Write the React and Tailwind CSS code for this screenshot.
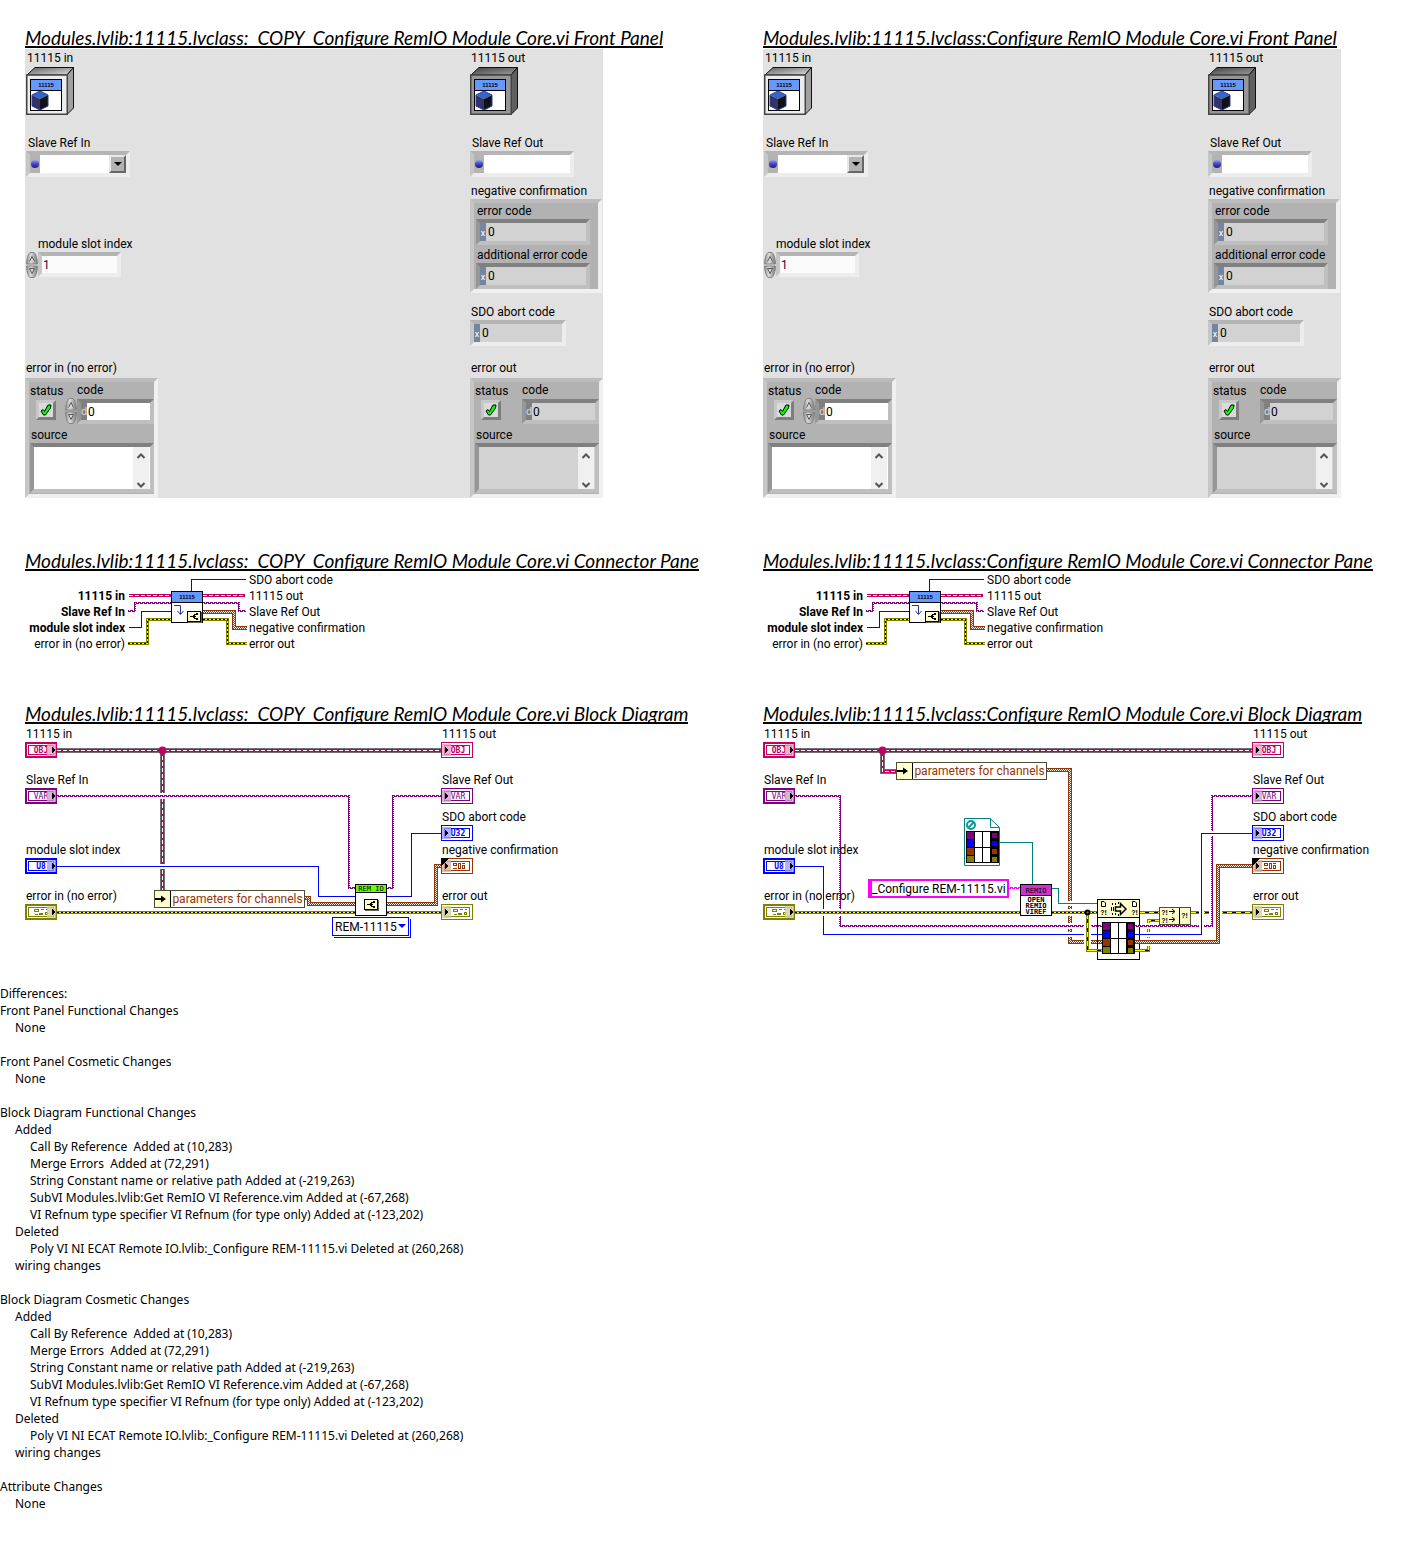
import React, { useId } from "react";

const PINK = "#c40062";
const PURPLE = "#800080";
const BLUE = "#0000ff";
const BROWN = "#993300";
const OLIVE = "#808000";
const TEAL = "#008080";

/* ---------- shared pieces ---------- */

function Heading({ children }) {
  return (
    <h2 className="h-[22px] w-fit overflow-hidden whitespace-pre border-b-2 border-black font-[Lato,sans-serif] text-[19px] italic leading-[24px] [font-variant-ligatures:none]">
      {children}
    </h2>
  );
}

function Patterns() {
  return (
    <svg width="0" height="0" className="absolute" aria-hidden="true">
      <defs>
        <pattern id="weave" width="2" height="2" patternUnits="userSpaceOnUse">
          <rect width="2" height="2" fill={BROWN} />
          <rect width="1" height="1" fill="#fff" />
          <rect x="1" y="1" width="1" height="1" fill="#fff" />
        </pattern>
        <pattern id="zigzag" width="4" height="2" patternUnits="userSpaceOnUse">
          <rect width="4" height="2" fill={PURPLE} />
          <rect x="1" width="1" height="1" fill="#fff" />
          <rect x="3" y="1" width="1" height="1" fill="#fff" />
        </pattern>
        <pattern id="zigzagPink" width="4" height="2" patternUnits="userSpaceOnUse">
          <rect width="4" height="2" fill="#ff00ff" />
          <rect x="1" width="1" height="1" fill="#fff" />
          <rect x="3" y="1" width="1" height="1" fill="#fff" />
        </pattern>
        <linearGradient id="shadeTop" x1="0" y1="0" x2="1" y2="1">
          <stop offset="0" stopColor="#606060" />
          <stop offset="1" stopColor="#e0e0e0" />
        </linearGradient>
        <linearGradient id="shadeTopDark" x1="0" y1="0" x2="1" y2="1">
          <stop offset="0" stopColor="#404040" />
          <stop offset="1" stopColor="#a0a0a0" />
        </linearGradient>
        <linearGradient id="ball" x1="0" y1="0" x2="0" y2="1">
          <stop offset="0" stopColor="#9a9af0" />
          <stop offset="0.5" stopColor="#4444c8" />
          <stop offset="1" stopColor="#1c1c78" />
        </linearGradient>
        <linearGradient id="knob" x1="0" y1="0" x2="1" y2="0">
          <stop offset="0" stopColor="#8c8c8c" />
          <stop offset="0.4" stopColor="#dcdcdc" />
          <stop offset="1" stopColor="#787878" />
        </linearGradient>
      </defs>
    </svg>
  );
}

/* ---------- wires ---------- */

function Wire({ kind, d, halo }) {
  const layers = {
    obj: [["#707070", 5], [PINK, 3], ["#fff", 1, "4 2"]],
    objThin: [[PINK, 3], ["#fff", 1, "4 2"]],
    ref: [["url(#zigzag)", 2]],
    str: [["url(#zigzagPink)", 2]],
    int: [[BLUE, 1]],
    vi: [[TEAL, 1]],
    cluster: [[BROWN, 4], ["url(#weave)", 2]],
    error: [[OLIVE, 3], ["#ffff00", 1], ["#000", 1, "2 2"]],
    errorLong: [[OLIVE, 3], ["#000", 1], ["#ffff00", 1, "5 4"]],
  }[kind];
  return (
    <g fill="none" strokeLinejoin="miter" shapeRendering="crispEdges">
      {halo && <path d={d} stroke="#fff" strokeWidth={layers[0][1] + 4} />}
      {layers.map(([stroke, width, dash], i) => (
        <path key={i} d={d} stroke={stroke} strokeWidth={width} strokeDasharray={dash} />
      ))}
    </g>
  );
}

function Glyph({ x, y, size = 7, fill = "#000", children, weight = 700, mono }) {
  return (
    <text
      x={x}
      y={y}
      fontFamily={mono ? "DejaVu Sans Mono, monospace" : "Liberation Sans, sans-serif"}
      fontWeight={weight}
      fontSize={size}
      fill={fill}
      textAnchor="middle"
    >
      {children}
    </text>
  );
}

/* ---------- front panel ---------- */

function ClassCube({ dark }) {
  return (
    <svg width="48" height="48" viewBox="0 0 48 48" className="block">
      <path d="M1 8 L9 0.500 H47.500 L41 8 Z" fill={dark ? "url(#shadeTopDark)" : "url(#shadeTop)"} stroke="#111" />
      <path d="M41 8 L47.500 0.500 V41 L41 47.500 Z" fill={dark ? "#606060" : "#a0a0a0"} stroke="#111" />
      <rect x="0.750" y="8" width="40.500" height="39.250" fill={dark ? "#969696" : "#ececec"} stroke="#444" strokeWidth="1.500" />
      <rect x="4.500" y="12.500" width="31" height="31" fill="#fff" stroke="#000" />
      <rect x="5" y="13" width="30" height="10" fill="#6699ff" />
      <path d="M5 23.500 H35" stroke="#000" />
      <Glyph x="20" y="20" size={6}>11115</Glyph>
      <path d="M6 28 L14 24 L22 28 L14 32 Z" fill="#3366cc" />
      <path d="M6 28 L14 32 V43 L6 39 Z" fill="#333366" />
      <path d="M14 32 L22 28 V39 L14 43 Z" fill="#111118" />
      <path d="M6 28 L14 24 L22 28 V39 L14 43 L6 39 Z" fill="none" stroke="#2a3c9c" />
    </svg>
  );
}

function Spinner() {
  return (
    <svg width="12" height="26" viewBox="0 0 12 26" className="block shrink-0">
      <path d="M0.500 12 Q1 3 4 0.500 H8 Q11 3 11.500 12 Z" fill="url(#knob)" stroke="#848484" />
      <path d="M0.500 14 Q1 23 4 25.500 H8 Q11 23 11.500 14 Z" fill="url(#knob)" stroke="#848484" />
      <path d="M3.500 9.500 L6 4.500 L8.500 9.500" fill="#d8d8d8" stroke="#5a5a5a" />
      <path d="M8.500 16.500 L6 21.500 L3.500 16.500 Z" fill="#d8d8d8" stroke="#5a5a5a" />
    </svg>
  );
}

function Bullet() {
  return (
    <span className="flex w-[10px] items-center justify-center bg-[#b3b3b3]">
      <svg width="8" height="8" viewBox="0 0 8 8">
        <circle cx="4" cy="4" r="4" fill="url(#ball)" />
      </svg>
    </span>
  );
}

const LIGHT_BEVEL = "border-4 border-t-[#b4b4b4] border-l-[#c6c6c6] border-r-[#ededed] border-b-[#ededed]";
const DARK_BEVEL = "border-4 border-t-[#808080] border-l-[#969696] border-r-[#bfbfbf] border-b-[#bfbfbf]";

function RefControl({ label, output }) {
  const id = useId();
  return (
    <div className="mt-5">
      <label htmlFor={id} className="block pl-0.5">{label}</label>
      <div className={`flex h-[26px] w-[104px] ${LIGHT_BEVEL}`}>
        <Bullet />
        {output ? (
          <input id={id} readOnly className="min-w-0 flex-1 bg-white outline-none" />
        ) : (
          <div className="relative flex min-w-0 flex-1 bg-white">
            <select id={id} className="w-full appearance-none bg-white outline-none">
              <option></option>
            </select>
            <span className="pointer-events-none absolute inset-y-0 right-0 flex w-[17px] items-center justify-center border-2 border-t-[#e8e8e8] border-l-[#e8e8e8] border-r-[#666] border-b-[#666] bg-[#b3b3b3]">
              <svg width="8" height="4" viewBox="0 0 8 4"><path d="M0 0 H8 L4 4 Z" /></svg>
            </span>
          </div>
        )}
      </div>
    </div>
  );
}

function HexField({ label, bevel, width }) {
  const id = useId();
  return (
    <div>
      <label htmlFor={id} className="block pl-px">{label}</label>
      <div className={`flex h-[26px] ${width} ${bevel}`}>
        <span className="w-[6px] bg-[#74859f] text-center text-[9px] leading-[20px] text-white">x</span>
        <input id={id} readOnly defaultValue="0" className="min-w-0 flex-1 bg-[#d2d2d2] pl-0.5 outline-none" />
      </div>
    </div>
  );
}

function ErrorCluster({ title, output }) {
  const codeId = useId();
  const sourceId = useId();
  return (
    <fieldset>
      <legend className="pl-px">{title}</legend>
      <div className="mt-0.5 flex h-[120px] w-[133px] flex-col border-4 border-t-[#bcbcbc] border-l-[#c6c6c6] border-r-[#f0f0f0] border-b-[#f0f0f0] bg-[#b2b2b2] pl-px">
        <div className="flex justify-between">
          <div className="pt-px">
            <span className="block">status</span>
            <button
              type="button"
              aria-label="status"
              className="ml-[6px] mt-px flex size-5 items-center justify-center border-[3px] border-t-[#c8c8c8] border-l-[#c8c8c8] border-r-[#7d7d7d] border-b-[#7d7d7d] bg-[#dadada]"
            >
              <svg width="12" height="12" viewBox="0 0 12 12" className="shrink-0">
                <path d="M1 7 L3 5.500 L4.500 7.500 L8 1 L11 1 L10.500 4 L5.500 11 L3.500 11 Z" fill="#00ff00" stroke="#000" />
              </svg>
            </button>
          </div>
          <div>
            <label htmlFor={codeId} className={`block ${output ? "" : "pl-3"}`}>code</label>
            <div className="flex items-center">
              {!output && <Spinner />}
              <div className={`mt-px flex h-[25px] w-[77px] ${DARK_BEVEL}`}>
                <span className="w-[6px] bg-[#808080] text-center text-[11px] leading-[17px] text-[#d8d8d8]">d</span>
                <input
                  id={codeId}
                  readOnly={output}
                  defaultValue="0"
                  className={`min-w-0 flex-1 pl-px outline-none ${output ? "bg-[#d2d2d2]" : "bg-white"}`}
                />
              </div>
            </div>
          </div>
        </div>
        <label htmlFor={sourceId} className="mt-[3px] block pl-px">source</label>
        <div className={`flex h-[50px] ${DARK_BEVEL} ${output ? "bg-[#d2d2d2]" : "bg-white"}`}>
          <textarea id={sourceId} readOnly={output} className="block min-w-0 flex-1 resize-none overflow-hidden outline-none" />
          <div className="mr-px flex w-4 flex-col items-center justify-between bg-[#f0f0f0] pt-[6px] pb-px">
            <svg width="8" height="6" viewBox="0 0 8 6" fill="none"><path d="M0.500 5 L4 1.500 L7.500 5" stroke="#555" strokeWidth="2" /></svg>
            <svg width="8" height="6" viewBox="0 0 8 6" fill="none"><path d="M0.500 1 L4 4.500 L7.500 1" stroke="#555" strokeWidth="2" /></svg>
          </div>
        </div>
      </div>
    </fieldset>
  );
}

function FrontPanel() {
  const slotId = useId();
  return (
    <div className="mt-px flex h-[449px] w-full max-w-[578px] justify-between bg-[#e1e1e1] pt-px">
      <div className="flex flex-col">
        <div className="pl-px">
          <span className="block pl-px">11115 in</span>
          <div className="mt-px"><ClassCube /></div>
          <RefControl label="Slave Ref In" />
          <div className="mt-[59px]">
            <label htmlFor={slotId} className="block pl-3">module slot index</label>
            <div className="flex">
              <Spinner />
              <input
                id={slotId}
                defaultValue="1"
                className="h-[25px] w-[83px] border-4 border-t-[#b4b4b4] border-l-[#c6c6c6] border-r-[#ededed] border-b-[#ededed] bg-[#fafafa] pl-px text-[#400040] outline-none"
              />
            </div>
          </div>
        </div>
        <div className="mt-auto"><ErrorCluster title="error in (no error)" /></div>
      </div>
      <div className="flex flex-col">
        <span className="block pl-px">11115 out</span>
        <div className="mt-px"><ClassCube dark /></div>
        <RefControl label="Slave Ref Out" output />
        <fieldset className="mt-[6px]">
          <legend className="pl-px">negative confirmation</legend>
          <div className="flex h-[94px] w-[132px] flex-col gap-[2px] border-4 border-t-[#bcbcbc] border-l-[#c6c6c6] border-r-[#f0f0f0] border-b-[#f0f0f0] bg-[#b2b2b2] pl-0.5">
            <HexField label="error code" bevel={DARK_BEVEL} width="w-[114px]" />
            <HexField label="additional error code" bevel={DARK_BEVEL} width="w-[114px]" />
          </div>
        </fieldset>
        <div className="mt-[11px]">
          <HexField label="SDO abort code" bevel={LIGHT_BEVEL} width="w-[96px]" />
        </div>
        <div className="mt-auto"><ErrorCluster title="error out" output /></div>
      </div>
    </div>
  );
}

/* ---------- connector pane ---------- */

function WrenchBadge({ x, y }) {
  return (
    <g transform={`translate(${x} ${y})`} shapeRendering="crispEdges">
      <rect x="1" y="1" width="14" height="11" fill="#666" />
      <rect x="0.500" y="0.500" width="13" height="10" fill="#ffffcc" stroke="#000" />
      <path d="M3 5 H6 V4 H7 V3 H10 V4 H8 V7 H10 V8 H7 V7 H6 V6 H3 Z M8 5 H9 V6 H8 Z" fill="#000" />
      <path d="M9 2 H11 V4 H9 Z M9 7 H11 V9 H9 Z" fill="#000" />
    </g>
  );
}

function ConnectorPane() {
  return (
    <div className="mt-px flex leading-4">
      <div className="w-[100px] shrink-0 whitespace-nowrap pt-4 text-right">
        <div className="font-bold">11115 in</div>
        <div className="font-bold">Slave Ref In</div>
        <div className="font-bold">module slot index</div>
        <div>error in (no error)</div>
      </div>
      <svg width="124" height="80" viewBox="125 572 124 80" className="block shrink-0">
        <Wire kind="int" d="M191.500 591 V579.500 H246" />
        <Wire kind="objThin" d="M129 595.500 H171" />
        <Wire kind="objThin" d="M203 595.500 H245" />
        <Wire kind="ref" d="M128 611 H135 V603 H171" />
        <Wire kind="ref" d="M203 603 H239 V611 H246" />
        <Wire kind="int" d="M129 627.500 H141.500 V611.500 H171" />
        <Wire kind="cluster" d="M203 612 H234 V628 H247" />
        <Wire kind="error" d="M128 643.500 H147.500 V619.500 H171" />
        <Wire kind="error" d="M203 619.500 H227.500 V643.500 H247" />
        <rect x="171.500" y="591.500" width="31" height="31" fill="#fff" stroke="#000" />
        <rect x="172" y="592" width="30" height="10" fill="#6699ff" />
        <path d="M172 602.500 H202" stroke="#000" />
        <Glyph x="187" y="599" size={6}>11115</Glyph>
        <path d="M174 605.500 H180.500 V614 M177.500 611 L180.500 614.500 L183.500 611" fill="none" stroke="#333399" />
        <WrenchBadge x={187} y={611} />
      </svg>
      <div className="whitespace-nowrap">
        <div>SDO abort code</div>
        <div>11115 out</div>
        <div>Slave Ref Out</div>
        <div>negative confirmation</div>
        <div>error out</div>
      </div>
    </div>
  );
}

/* ---------- block diagram ---------- */

function ClusterMark({ x, color, error }) {
  return error ? (
    <path d={`M${x} 5.500 h4 v2 h-4 z M${x + 1} 10.500 h3 M${x + 5} 9.500 h3 v1 h-3 z M${x + 7} 5.500 h3 M${x + 12} 5.500 h2 M${x + 11.500} 8.500 h2 v2 h-2 z`} fill="none" stroke={color} />
  ) : (
    <path d={`M${x} 5.500 h3 v2 h-3 z M${x} 10.500 h4 M${x + 5.500} 5.500 h2 v5 h-2 z M${x + 9} 5.500 h3 M${x + 9.500} 7.500 h2 v3 h-2 z`} fill="none" stroke={color} />
  );
}

function Terminal({ label, code, color, out, at, corner }) {
  const mark = code === "ERR" || code === "CLU";
  const weight = code === "VAR" ? 400 : 700;
  return (
    <div className={`absolute ${at} whitespace-nowrap leading-4`}>
      <div className="pl-px">{label}</div>
      <svg width="32" height="16" viewBox="0 0 32 16" className="block" shapeRendering="crispEdges">
        {out ? (
          <>
            <rect x="0.500" y="0.500" width="31" height="15" fill="#fff" stroke={color} />
            <rect x="3.500" y="3.500" width="25" height="9" fill="#fff" stroke={color} />
            {mark ? <ClusterMark x={12} color={color} error={code === "ERR"} /> : <Glyph mono x="17" y="11" size={8} weight={weight} fill={color}>{code}</Glyph>}
            <rect x="1" y="2" width="9" height="12" fill="#fff" opacity="0.700" />
            <rect x="1" y="2" width="9" height="12" fill={color} opacity="0.300" />
            <path d="M4 5 L8 8 L4 11 Z" fill="#000" />
          </>
        ) : (
          <>
            <rect x="1" y="1" width="30" height="14" fill="#fff" stroke={color} strokeWidth="2" />
            <rect x="3.500" y="3.500" width="25" height="9" fill="#fff" stroke={color} />
            {mark ? <ClusterMark x={9} color={color} error={code === "ERR"} /> : <Glyph mono x="16" y="11" size={8} weight={weight} fill={color}>{code}</Glyph>}
            <rect x="22" y="2" width="9" height="12" fill="#fff" opacity="0.700" />
            <rect x="22" y="2" width="9" height="12" fill={color} opacity="0.300" />
            <path d="M27 5 L31 8 L27 11 Z" fill="#000" />
          </>
        )}
        {corner && <path d="M0 0 H8 L0 8 Z" fill="#000" />}
      </svg>
    </div>
  );
}

function InputTerminals() {
  return (
    <>
      <Terminal at="left-0 top-[2px]" label="11115 in" code="OBJ" color={PINK} />
      <Terminal at="left-0 top-[48px]" label="Slave Ref In" code="VAR" color={PURPLE} />
      <Terminal at="left-0 top-[118px]" label="module slot index" code="U8" color={BLUE} />
      <Terminal at="left-0 top-[164px]" label="error in (no error)" code="ERR" color={OLIVE} />
    </>
  );
}

function OutputTerminals({ at }) {
  return (
    <div className={`absolute ${at} top-0`}>
      <Terminal at="left-0 top-[2px]" label="11115 out" code="OBJ" color={PINK} out />
      <Terminal at="left-0 top-[48px]" label="Slave Ref Out" code="VAR" color={PURPLE} out />
      <Terminal at="left-0 top-[85px]" label="SDO abort code" code="U32" color={BLUE} out />
      <Terminal at="left-0 top-[118px]" label="negative confirmation" code="CLU" color={BROWN} out corner />
      <Terminal at="left-0 top-[164px]" label="error out" code="ERR" color={OLIVE} out />
    </div>
  );
}

function Unbundle({ at }) {
  return (
    <div className={`absolute ${at} flex h-[18px] w-[151px] border border-[#4d4d33] bg-white`}>
      <span className="flex w-4 items-center border-r border-black bg-[#ffffcc]">
        <svg width="11" height="8" viewBox="0 0 11 8"><path d="M0 3 H6 V0.500 L11 4 L6 7.500 V5 H0 Z" /></svg>
      </span>
      <span className="flex-1 whitespace-nowrap text-center leading-4 text-[#993300]">parameters for channels</span>
    </div>
  );
}

function TypeGrid({ x, y }) {
  const colors = [PURPLE, BLUE, BROWN, OLIVE];
  return (
    <g transform={`translate(${x} ${y})`} shapeRendering="crispEdges">
      <rect width="33" height="32" fill="#000" />
      <rect x="9" y="1" width="7" height="15" fill="#fff" />
      <rect x="17" y="1" width="7" height="15" fill="#fff" />
      <rect x="9" y="17" width="7" height="14" fill="#fff" />
      <rect x="17" y="17" width="7" height="14" fill="#fff" />
      {colors.map((c, i) => (
        <g key={c}>
          <rect x="1" y={1 + i * 8} width="7" height={i === 3 ? 6 : 7} fill={c} />
          <rect x="26" y={2 + i * 8} width="5" height="5" fill={c} />
        </g>
      ))}
    </g>
  );
}

function Canvas({ children }) {
  return (
    <svg width="640" height="240" viewBox="25 724 640 240" className="absolute left-0 top-0 max-w-none">
      {children}
    </svg>
  );
}

function CopyDiagram() {
  const id = useId();
  return (
    <div className="relative h-[240px]">
      <Canvas>
        <Wire kind="obj" d="M57 750.500 H441" />
        <Wire kind="obj" d="M162.500 750 V890" />
        <circle cx="162.500" cy="750.500" r="4" fill={PINK} />
        <Wire kind="ref" d="M57 796 H349 V888 H355" halo />
        <Wire kind="ref" d="M387 888 H393 V796 H441" />
        <Wire kind="int" d="M57 866.500 H318.500 V896.500 H355" halo />
        <Wire kind="int" d="M387 896.500 H411.500 V833.500 H441" />
        <Wire kind="cluster" d="M305 898 H309 V904 H355" />
        <Wire kind="cluster" d="M387 904 H436 V866 H442" />
        <Wire kind="error" d="M57 912.500 H355" />
        <Wire kind="error" d="M387 912.500 H441" />
        <rect x="355.500" y="884.500" width="31" height="31" fill="#fff" stroke="#000" />
        <rect x="356" y="885" width="30" height="7" fill="#66ff00" />
        <path d="M356 892.500 H386" stroke="#000" />
        <Glyph mono x="371" y="891" weight={400}>REM IO</Glyph>
        <WrenchBadge x={364} y={899} />
      </Canvas>
      <InputTerminals />
      <OutputTerminals at="left-[416px]" />
      <Unbundle at="left-[129px] top-[166px]" />
      <div className="absolute left-[307px] top-[193px] h-[19px] w-[77px] border border-[#0000ff] bg-white shadow-[1px_1px_0_#fff,2px_2px_0_#0000ff]">
        <label htmlFor={id} className="sr-only">Instance</label>
        <select id={id} className="block h-[17px] w-full appearance-none bg-transparent pl-0.5 outline-none">
          <option>REM-11115</option>
        </select>
        <svg width="8" height="4" viewBox="0 0 8 4" className="pointer-events-none absolute right-[2px] top-[6px]">
          <path d="M0 0 H8 L4 4 Z" fill={BLUE} />
        </svg>
      </div>
    </div>
  );
}

function ReferenceDiagram() {
  return (
    <div className="relative h-[240px]">
      <Canvas>
        <Wire kind="obj" d="M144.500 750 V771.500 H158" />
        <Wire kind="obj" d="M57 750.500 H514" />
        <circle cx="144.500" cy="750.500" r="4" fill={PINK} />
        <Wire kind="cluster" d="M309 770 H332 V942 H359" />
        <Wire kind="int" d="M57 866.500 H85.500 V934.500 H359" halo />
        <Wire kind="ref" d="M57 796 H102 V926 H359" halo />
        <Wire kind="error" d="M57 912.500 H282" halo />
        <Wire kind="error" d="M314 912.500 H359" halo />
        <Wire kind="vi" d="M262 842.500 H294.500 V884" />
        <Wire kind="vi" d="M314 888.500 H320.500 V903.500 H359" halo />
        <Wire kind="str" d="M271 888 H282" />
        <Wire kind="errorLong" d="M349.500 914 V950.500 H364" halo />
        <circle cx="349.500" cy="912.500" r="3" fill="#000" />
        <circle cx="349.500" cy="912.500" r="1" fill={OLIVE} />

        <Wire kind="errorLong" d="M402 912.500 H421" />
        <Wire kind="errorLong" d="M453 912.500 H514" />
        <Wire kind="errorLong" d="M402 950.500 H410.500 V920.500 H421" />
        <Wire kind="cluster" d="M402 942 H480 V866 H515" halo />
        <Wire kind="ref" d="M402 926 H474 V796 H514" halo />
        <Wire kind="int" d="M402 934.500 H463.500 V833.500 H514" halo />

        <path d="M226.500 818.500 H252 L261.500 827.500 V865.500 H226.500 Z" fill="#fff" stroke={TEAL} />
        <path d="M252.500 818.500 V827.500 H261" fill="none" stroke={TEAL} />
        <circle cx="233" cy="825" r="4" fill="none" stroke="#109898" strokeWidth="2" />
        <path d="M230 828 L236 822" stroke="#109898" strokeWidth="2" />
        <TypeGrid x={228} y={831} />

        <rect x="282.500" y="884.500" width="31" height="31" fill="#fff" stroke="#000" />
        <rect x="283" y="885" width="30" height="10" fill="#cc33cc" />
        <path d="M283 895.500 H313" stroke="#000" />
        <Glyph mono x="298" y="893" weight={400}>REMIO</Glyph>
        <Glyph mono x="298" y="902">OPEN</Glyph>
        <Glyph mono x="298" y="908">REMIO</Glyph>
        <Glyph mono x="298" y="914">VIREF</Glyph>

        <rect x="359.500" y="899.500" width="42" height="60" fill="#fff" stroke="#000" />
        <rect x="360" y="900" width="41" height="18" fill="#ffffcc" />
        <path d="M360 917.500 H401" stroke="#000" />
        <path d="M363.500 901.500 H366 L367.500 903 V906.500 H363.500 Z M394.500 901.500 H397 L398.500 903 V906.500 H394.500 Z" fill="#fff" stroke="#000" />
        <Glyph x="365.500" y="915">?!</Glyph>
        <Glyph x="396.500" y="915">?!</Glyph>
        <path d="M373.500 907 V911 M375.500 907 V911 M374.500 903 V905 M377.500 903 V905 M380.500 902 V904 M374.500 913 V915 M377.500 913 V915 M380.500 914 V916" stroke="#000" />
        <path d="M377.500 907 H382.500 V903.500 L388 909 L382.500 914.500 V911 H377.500 Z" fill="#ffffcc" stroke="#000" strokeWidth="1.500" />
        <TypeGrid x={364} y={922} />
        <Wire kind="ref" d="M360 926 H364" />
        <Wire kind="int" d="M360 934.500 H364" />
        <Wire kind="cluster" d="M360 942 H364" />
        <Wire kind="errorLong" d="M354 950.500 H364" />
        <Wire kind="ref" d="M397 926 H402" />
        <Wire kind="int" d="M397 934.500 H402" />
        <Wire kind="cluster" d="M397 942 H402" />
        <Wire kind="errorLong" d="M397 950.500 H402" />

        <rect x="421.500" y="907.500" width="31" height="17" fill="#ffffcc" stroke="#4d4d33" />
        <path d="M441.500 908 V924" stroke="#000" />
        <Glyph x="426.500" y="915">?!</Glyph>
        <Glyph x="426.500" y="923">?!</Glyph>
        <Glyph x="446.500" y="918">?!</Glyph>
        <path d="M431 911.500 H436 M434 909 L437 911.500 L434 914 M431 919.500 H436 M434 917 L437 919.500 L434 922" fill="none" stroke="#000" />
      </Canvas>
      <InputTerminals />
      <OutputTerminals at="left-[489px]" />
      <Unbundle at="left-[133px] top-[38px]" />
      <input
        aria-label="VI name"
        readOnly
        defaultValue="_Configure REM-11115.vi"
        className="absolute left-[105px] top-[155px] h-[19px] w-[141px] border-2 border-l-4 border-[#ff00ff] bg-white outline-none"
      />
    </div>
  );
}

/* ---------- report ---------- */

const ADDED = [
  "Call By Reference  Added at (10,283)",
  "Merge Errors  Added at (72,291)",
  "String Constant name or relative path Added at (-219,263)",
  "SubVI Modules.lvlib:Get RemIO VI Reference.vim Added at (-67,268)",
  "VI Refnum type specifier VI Refnum (for type only) Added at (-123,202)",
];
const DELETED = ["Poly VI NI ECAT Remote IO.lvlib:_Configure REM-11115.vi Deleted at (260,268)"];
const DIAGRAM_CHANGES = [
  { text: "Added", items: ADDED },
  { text: "Deleted", items: DELETED },
  { text: "wiring changes" },
];
const REPORT = [
  { title: "Front Panel Functional Changes", entries: [{ text: "None" }] },
  { title: "Front Panel Cosmetic Changes", entries: [{ text: "None" }] },
  { title: "Block Diagram Functional Changes", entries: DIAGRAM_CHANGES },
  { title: "Block Diagram Cosmetic Changes", entries: DIAGRAM_CHANGES },
  { title: "Attribute Changes", entries: [{ text: "None" }] },
];

function Report() {
  return (
    <section className="mt-[21px] whitespace-pre pb-8 font-['Noto_Sans',sans-serif] text-[12px] leading-[17px]">
      <h2>Differences:</h2>
      <div className="flex flex-col gap-[17px]">
        {REPORT.map(({ title, entries }) => (
          <div key={title}>
            <h3>{title}</h3>
            <ul className="pl-[15px]">
              {entries.map(({ text, items }) => (
                <li key={text}>
                  {text}
                  {items && (
                    <ul className="pl-[15px]">
                      {items.map((item) => <li key={item}>{item}</li>)}
                    </ul>
                  )}
                </li>
              ))}
            </ul>
          </div>
        ))}
      </div>
    </section>
  );
}

function Version({ name, children }) {
  return (
    <section>
      <Heading>{`${name} Front Panel`}</Heading>
      <FrontPanel />
      <div className="mt-[51px]"><Heading>{`${name} Connector Pane`}</Heading></div>
      <ConnectorPane />
      <div className="mt-[50px]"><Heading>{`${name} Block Diagram`}</Heading></div>
      {children}
    </section>
  );
}

export default function App() {
  return (
    <main className="min-h-screen overflow-x-hidden bg-white pt-[26px] font-[Roboto,sans-serif] text-[12px] leading-4 text-black">
      <Patterns />
      <div className="grid grid-cols-[minmax(0,738fr)_minmax(0,650fr)] pl-[25px]">
        <Version name="Modules.lvlib:11115.lvclass:  COPY  Configure RemIO Module Core.vi"><CopyDiagram /></Version>
        <Version name="Modules.lvlib:11115.lvclass:Configure RemIO Module Core.vi"><ReferenceDiagram /></Version>
      </div>
      <Report />
    </main>
  );
}
